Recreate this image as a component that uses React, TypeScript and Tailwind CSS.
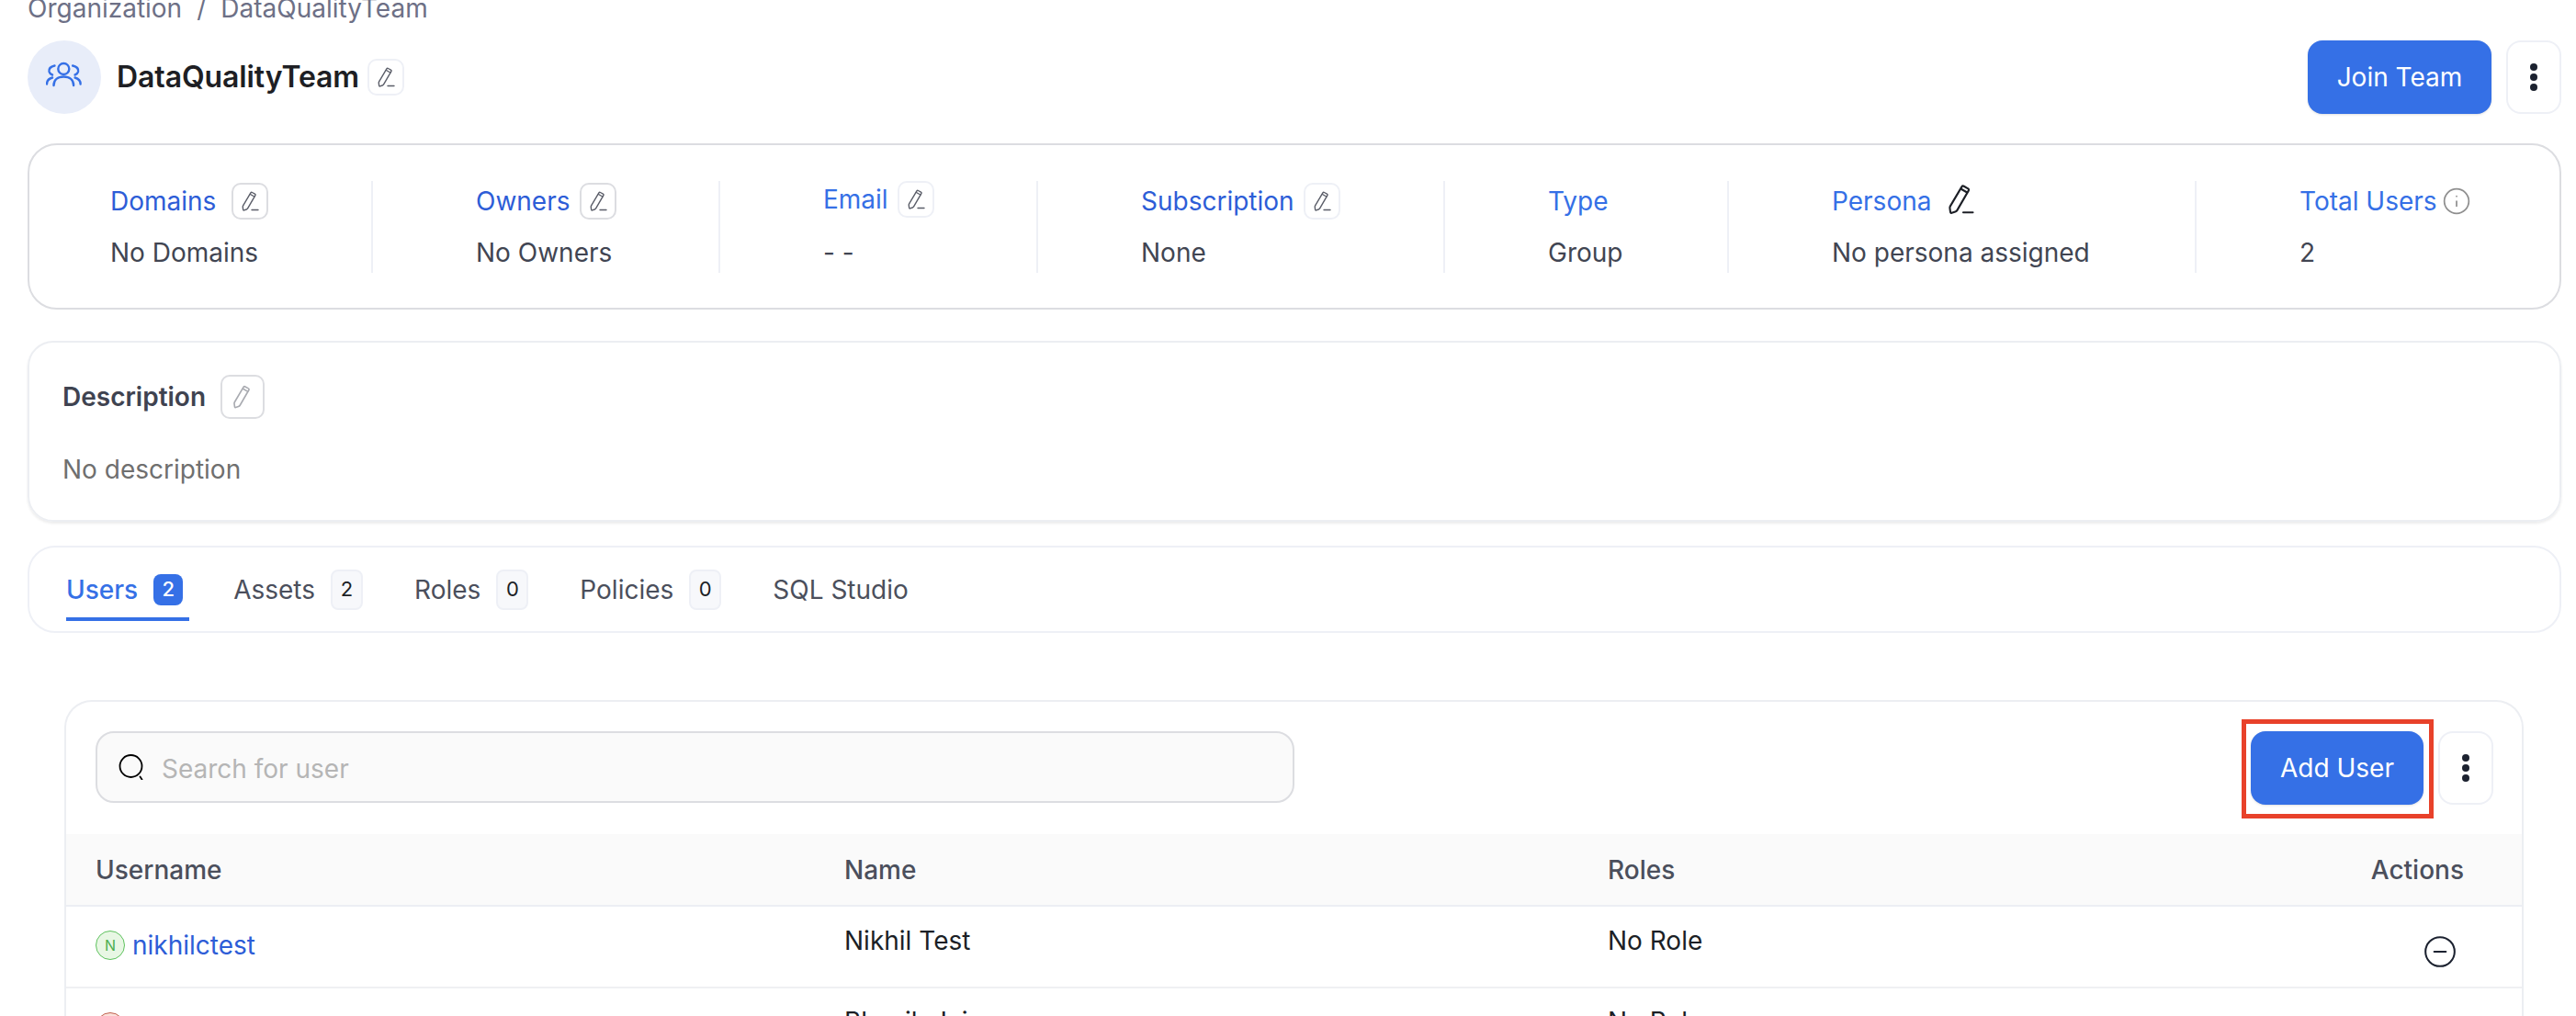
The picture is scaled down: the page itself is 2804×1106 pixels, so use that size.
import { MinusCircle, Info } from "lucide-react";

const font = { fontFamily: "Inter, sans-serif" };

function EditIcon({ className = "w-6 h-6", line = true }: { className?: string; line?: boolean }) {
  return (
    <svg viewBox="0 0 24 24" fill="none" stroke="currentColor" strokeWidth="1.4" strokeLinecap="round" strokeLinejoin="round" className={className}>
      <path d="M14.5 2.5 17.5 4.2a1 1 0 0 1 .4 1.4L9.6 19.9c-.3.5-.8.9-1.4 1.1l-2.6.9a.7.7 0 0 1-.9-.5l-.4-2.8c-.1-.6 0-1.2.3-1.7L12.9 2.9a1.2 1.2 0 0 1 1.6-.4Z" />
      <path d="M12.5 4.5 16.8 7" />
      {line && <path d="M14 21.5h7" />}
    </svg>
  );
}

function TeamIcon() {
  return (
    <svg viewBox="0 0 40 40" fill="none" stroke="currentColor" strokeWidth="2.4" strokeLinecap="round" className="h-10 w-10">
      <circle cx="19.3" cy="11" r="6" />
      <path d="M8.5 29C8.5 23 13 19.5 19.3 19.5S30.1 23 30.1 29" />
      <path d="M9.5 7.5C5 8.5 3 11 3.5 14C4 16 5.5 17 7 17.5" />
      <path d="M1 27.5C1 24 3.5 21.5 7 20.5" />
      <path d="M29.1 7.5C33.6 8.5 35.6 11 35.1 14C34.6 16 33.1 17 31.6 17.5" />
      <path d="M37.6 27.5C37.6 24 35.1 21.5 31.6 20.5" />
    </svg>
  );
}

function SearchIcon() {
  return (
    <svg viewBox="0 0 28 28" fill="none" stroke="black" strokeWidth="1.8" strokeLinecap="round" className="h-7 w-7 shrink-0">
      <circle cx="13.5" cy="13" r="12" />
      <path d="M23.5 24.5 25.5 27.5" />
    </svg>
  );
}

function EditBox({ light }: { light?: boolean }) {
  return (
    <span className={`flex h-10 w-10 shrink-0 items-center justify-center rounded-[10px] border-2 text-[#5a5d68] ${light ? "border-[#eef0f6]" : "border-[#dcdde1]"}`}>
      <EditIcon />
    </span>
  );
}

function Dots() {
  return (
    <span className="flex flex-col gap-[3px]">
      <span className="h-2 w-2 rounded-full bg-[#1c2230]" />
      <span className="h-2 w-2 rounded-full bg-[#1c2230]" />
      <span className="h-2 w-2 rounded-full bg-[#1c2230]" />
    </span>
  );
}

function MoreButton() {
  return (
    <button className="flex h-20 w-[60px] items-center justify-center rounded-2xl border-2 border-[#eef0f6] bg-white">
      <Dots />
    </button>
  );
}

function StatColumn({
  label,
  value,
  className,
  gap = "gap-[10px]",
  dark = true,
  edit,
  lightBox,
  children,
  raised,
}: {
  label: string;
  value: string;
  className: string;
  gap?: string;
  dark?: boolean;
  edit?: boolean;
  lightBox?: boolean;
  children?: React.ReactNode;
  raised?: boolean;
}) {
  return (
    <div className={`${className} flex h-[100px] flex-col border-[#eef0f6] [&:not(:last-child)]:border-r-2`}>
      <div className={`flex h-10 items-center ${gap} ${raised ? "mt-0" : "mt-[2px]"}`}>
        <span className={`text-[28px] leading-none ${dark ? "text-[#2d5dd7]" : "text-[#3570e6]"}`}>{label}</span>
        {edit && <EditBox light={lightBox} />}
        {children}
      </div>
      <div className={`${raised ? "mt-[18px]" : "mt-4"} text-[28px] leading-[40px] text-[#414552]`}>{value}</div>
    </div>
  );
}

function Tab({ label, count, active }: { label: string; count?: number; active?: boolean }) {
  return (
    <div className="relative flex h-[44px] items-center gap-[17px]">
      <span className={`text-[28px] leading-none ${active ? "font-medium text-[#3570e6]" : "text-[#4b4f5c]"}`}>{label}</span>
      {count !== undefined &&
        (active ? (
          <span className="flex h-[34px] w-8 items-center justify-center rounded-lg bg-[#3570e6] text-[22px] font-medium text-white">{count}</span>
        ) : (
          <span className="flex h-11 w-[35px] items-center justify-center rounded-lg border-2 border-[#eef0f6] bg-[#f7f8fb] text-[22px] text-[#1c1f26]">{count}</span>
        ))}
    </div>
  );
}

export default function App() {
  return (
    <div className="h-[1106px] overflow-hidden bg-white" style={font}>
      <div className="mx-auto w-full pl-[30px] pr-4 -mt-[9px]">
        <div className="flex h-9 items-center gap-4 text-[28px] leading-none text-[#6d7086]">
          <span>Organization</span>
          <span>/</span>
          <span>DataQualityTeam</span>
        </div>

        <div className="mt-[17px] flex h-20 items-center">
          <div className="flex h-20 w-20 items-center justify-center rounded-full bg-[#e8edf9] text-[#3570e6]">
            <TeamIcon />
          </div>
          <h1 className="ml-[17px] text-[32px] font-semibold leading-none tracking-[-0.1px] text-[#1e1f24]">DataQualityTeam</h1>
          <span className="ml-[9px]"><EditBox light /></span>
          <div className="ml-auto flex gap-4">
            <button className="h-20 w-[200px] rounded-2xl bg-[#3570e6] text-[28px] text-white shadow-sm">Join Team</button>
            <MoreButton />
          </div>
        </div>

        <div className="mt-8 flex h-[181px] items-center rounded-[32px] border-2 border-[#dcdde1]">
          <StatColumn label="Domains" value="No Domains" className="w-[374px] pl-[88px]" gap="gap-[17px]" edit />
          <StatColumn label="Owners" value="No Owners" className="w-[378px] pl-[112px]" edit />
          <StatColumn label="Email" value="- -" className="w-[346px] pl-[112px]" dark={false} edit lightBox raised />
          <StatColumn label="Subscription" value="None" className="w-[443px] pl-[112px]" edit lightBox />
          <StatColumn label="Type" value="Group" className="w-[309px] pl-[112px]" dark={false} />
          <StatColumn label="Persona" value="No persona assigned" className="w-[509px] pl-[112px]" dark={false} gap="gap-[14px]">
            <EditIcon className="-mt-1 h-9 w-9 text-[#1c1f26]" />
          </StatColumn>
          <StatColumn label="Total Users" value="2" className="flex-1 pl-[112px]" dark={false} gap="gap-[5px]">
            <Info className="h-8 w-8 text-[#8f8f8f]" strokeWidth={1.3} />
          </StatColumn>
        </div>

        <div className="mt-[34px] h-[197px] rounded-[28px] border-2 border-[#eceef2] pl-9 pt-[35px] shadow-[0_2px_3px_rgba(0,0,0,0.08)]">
          <div className="flex h-12 items-center gap-4">
            <span className="text-[28px] font-semibold leading-none text-[#3f4350]">Description</span>
            <span className="flex h-12 w-12 items-center justify-center rounded-[10px] border-2 border-[#dcdde1] text-[#a9abb1]">
              <EditIcon className="h-7 w-7" line={false} />
            </span>
          </div>
          <p className="mt-[35px] text-[28px] leading-10 text-[#6f6f6f]">No description</p>
        </div>

        <div className="relative mt-[26px] flex h-[95px] items-center gap-14 rounded-[30px] border-2 border-[#eef0f6] pl-10 pr-4">
          <div className="relative -mr-[8px] pr-[7px]">
            <Tab label="Users" count={2} active />
            <span className="absolute -bottom-[12px] left-0 right-0 h-1 bg-[#3570e6]" />
          </div>
          <Tab label="Assets" count={2} />
          <Tab label="Roles" count={0} />
          <Tab label="Policies" count={0} />
          <Tab label="SQL Studio" />
        </div>

        <div className="ml-10 mr-[41px] mt-[73px] h-[400px] rounded-t-[30px] border-x-2 border-t-2 border-[#eceef2]">
          <div className="flex h-[144px] items-start pl-8 pr-[31px] pt-8">
            <div className="flex h-[78px] w-[1305px] items-center gap-[19px] rounded-[20px] border-2 border-[#dcdde1] bg-[#fafafa] pl-[23px]">
              <SearchIcon />
              <span className="pt-[3px] text-[28px] leading-none text-[#b5b5b5]">Search for user</span>
            </div>
            <div className="ml-auto flex gap-4">
              <div className="relative">
                <button className="h-20 w-[188px] rounded-2xl bg-[#3570e6] text-[28px] text-white shadow-sm">Add User</button>
                <span className="pointer-events-none absolute -bottom-[15px] -left-[10px] -right-[11px] -top-[13px] border-[5px] border-[#e8412a]" />
              </div>
              <MoreButton />
            </div>
          </div>

          <div className="grid h-[79px] grid-cols-[815px_831px_1fr_auto] items-center border-b-2 border-[#eceef4] bg-[#fafafa] pl-8 pr-[63px] text-[28px] font-medium text-[#4b4f5c]">
            <span>Username</span>
            <span>Name</span>
            <span>Roles</span>
            <span>Actions</span>
          </div>

          <div className="grid h-[89px] grid-cols-[815px_831px_1fr_auto] border-b-2 border-[#eff0f3] pl-8 pr-[70px] text-[28px] text-[#1c1f26]">
            <div className="flex items-center gap-2 pb-[4px]">
              <span className="flex h-8 w-8 items-center justify-center rounded-full border border-[#5ec25e] bg-[#e8f7e4] text-[16px] text-[#4caf50]">N</span>
              <span className="text-[#2d5dd7]">nikhilctest</span>
            </div>
            <span className="pt-[20px] leading-[34px]">Nikhil Test</span>
            <span className="pt-[20px] leading-[34px]">No Role</span>
            <div className="pt-[30px]">
              <MinusCircle className="h-[38px] w-[38px] text-[#1c2230]" strokeWidth={1.3} />
            </div>
          </div>

          <div className="grid grid-cols-[815px_831px_1fr_auto] pl-8 pr-[70px] pt-[19px] text-[28px] leading-[34px] text-[#1c1f26]">
            <div className="flex items-start gap-2 pt-[7px]">
              <span className="flex h-8 w-8 items-center justify-center rounded-full border border-[#c0614f] bg-[#fbe0da] text-[16px] text-[#c0614f]">B</span>
              <span className="pt-[6px] text-[#2d5dd7]">bhaviktest</span>
            </div>
            <span>Bhavik Jain</span>
            <span>No Role</span>
          </div>
        </div>
      </div>
    </div>
  );
}
